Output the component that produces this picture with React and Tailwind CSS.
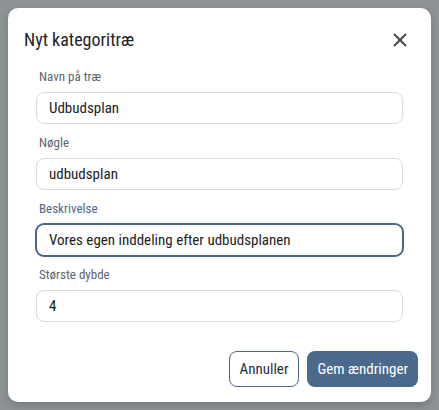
function Field({ label, value, focused }) {
  return (
    <div className="flex flex-col">
      <label
        className={
          "pl-[3px] text-[13px] leading-[18px] mb-1.5 " +
          (focused ? "text-[#4b6889]" : "text-[#5c6570]")
        }
      >
        {label}
      </label>
      <input
        readOnly
        value={value}
        className={
          "h-8 w-full rounded-lg bg-white px-3 text-[15px] text-[#1b1d21] outline-none " +
          (focused
            ? "border border-[#4b6584] ring-1 ring-[#4b6584] rounded-[9px]"
            : "border border-[#d6d9de]")
        }
      />
    </div>
  );
}

export default function App() {
  return (
    <div className="w-[439px] h-[410px] bg-[#8e9396] p-2 font-['Roboto_Condensed',Roboto,sans-serif]">
      <div className="flex h-[394px] w-[423px] flex-col rounded-[10px] bg-white px-[15px] pt-5 pb-[15px] shadow-[0_4px_10px_rgba(0,0,0,0.18)]">
        <div className="flex h-6 items-center justify-between">
          <h2 className="text-[18px] leading-6 text-[#1f2328] pl-px">Nyt kategoritræ</h2>
          <button className="mr-[4px] flex h-6 w-6 items-center justify-center text-[#3b4250]">
            <svg width="14" height="14" viewBox="0 0 14 14" fill="none" stroke="currentColor" strokeWidth="1.8" strokeLinecap="round">
              <path d="M1.5 1.5 L12.5 12.5 M12.5 1.5 L1.5 12.5" />
            </svg>
          </button>
        </div>
        <div className="mt-4 flex flex-col gap-[10px] px-[13px]">
          <Field label="Navn på træ" value="Udbudsplan" />
          <Field label="Nøgle" value="udbudsplan" />
          <Field label="Beskrivelse" value="Vores egen inddeling efter udbudsplanen" focused />
          <Field label="Største dybde" value="4" />
        </div>
        <div className="mt-[29px] -mr-0.5 flex justify-end gap-2">
          <button className="h-9 rounded-lg border border-[#4b6889] bg-white px-[10px] text-[15px] text-[#2b313a]">
            Annuller
          </button>
          <button className="h-9 rounded-lg bg-[#4b6a8b] px-[10px] text-[15px] text-white">
            Gem ændringer
          </button>
        </div>
      </div>
    </div>
  );
}
